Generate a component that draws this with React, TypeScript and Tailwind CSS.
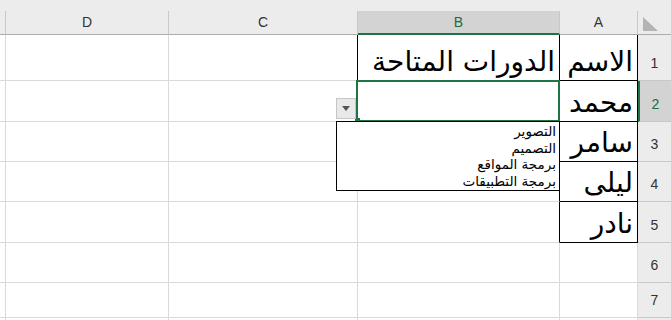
import React from 'react'

const COLS = ['E', 'D', 'C', 'B', 'A']
const ROW_H = [46, 41, 40, 40, 41, 40, 35, 30]
const NAMES: Record<number, string> = { 1: 'الاسم', 2: 'محمد', 3: 'سامر', 4: 'ليلى', 5: 'نادر' }
const COURSES = ['التصوير', 'التصميم', 'برمجة المواقع', 'برمجة التطبيقات']

const arabic = { fontFamily: '"DejaVu Sans", "Liberation Sans", sans-serif' }

function Cell({ col, row }: { col: string; row: number }) {
  // borders: default gray grid, black where the data table is
  let cls = 'border-r border-b border-[#dadada]'
  if (col === 'C' && row === 1) cls = 'border-r border-b border-r-black border-b-[#dadada]'
  if (col === 'B' && row === 1) cls = 'border-r border-b border-black'
  if (col === 'B' && row >= 2 && row <= 5) cls = 'border-r border-b border-r-black border-b-[#dadada]'
  if (col === 'A' && row <= 5) cls = 'border-r border-b border-black'

  let text = ''
  if (col === 'A') text = NAMES[row] ?? ''
  if (col === 'B' && row === 1) text = 'الدورات المتاحة'

  return (
    <div className={`relative flex items-end justify-end bg-white ${cls}`}>
      {text && (
        <span dir="rtl" className="pr-[4px] pb-[4px] text-[28px] leading-none text-black" style={arabic}>
          {text}
        </span>
      )}
      {col === 'B' && row === 2 && (
        <div className="pointer-events-none absolute -left-[2px] -top-[1px] right-[-1px] bottom-[-1px] border-2 border-[#217346]">
          <div className="absolute -bottom-[3px] -left-[3px] h-[5px] w-[5px] bg-[#217346]" />
        </div>
      )}
    </div>
  )
}

export default function App() {
  return (
    <div className="relative h-[320px] w-[671px] overflow-hidden bg-white select-none" style={{ fontFamily: '"Liberation Sans", Arial, sans-serif' }}>
      <div className="h-[11px] bg-[#ececec]" />
      <div className="grid grid-cols-[6px_163px_189px_202px_78px_33px]" style={{ gridTemplateRows: `24px ${ROW_H.map(h => h + 'px').join(' ')}` }}>
        {/* column headers */}
        {COLS.map(c => (
          <div
            key={c}
            className={`flex items-center justify-center border-r border-r-[#c8c8c8] text-[14px] ${
              c === 'B' ? 'bg-[#d3d3d3] border-b-2 border-b-[#217346] text-[#1e6b41]' : 'bg-[#ececec] border-b border-b-[#ababab] text-[#333]'
            }`}
          >
            {c === 'E' ? '' : c}
          </div>
        ))}
        <div className="relative bg-[#ececec] border-b border-b-[#ababab]">
          <svg className="absolute left-[5px] top-[6px]" width="15" height="14" viewBox="0 0 15 14">
            <polygon points="0,0 0,14 15,14" fill="#b4b4b4" />
          </svg>
        </div>

        {ROW_H.map((_, i) => {
          const row = i + 1
          return (
            <React.Fragment key={row}>
              {COLS.map(c => (
                <Cell key={c} col={c} row={row} />
              ))}
              <div
                className={`flex items-end justify-center pb-[6px] border-b border-b-[#c8c8c8] text-[14px] ${
                  row === 2 ? 'bg-[#d3d3d3] border-l-2 border-l-[#217346] text-[#1e6b41]' : 'bg-[#ececec] text-[#333]'
                }`}
              >
                {row < 8 ? row : ''}
              </div>
            </React.Fragment>
          )
        })}
      </div>

      {/* data validation arrow */}
      <div className="absolute left-[336px] top-[98px] flex h-[21px] w-[20px] items-center justify-center border border-[#c6c6c6] bg-[#e9e9e9]">
        <svg width="8" height="5" viewBox="0 0 8 5">
          <polygon points="0,0 8,0 4,5" fill="#555" />
        </svg>
      </div>

      {/* dropdown list */}
      <div dir="rtl" className="absolute left-[336px] top-[121px] h-[70px] w-[224px] border border-black bg-white pr-[3px] pt-[1px]" style={arabic}>
        {COURSES.map(c => (
          <div key={c} className="h-[16.5px] text-[13.5px] leading-[16px] text-black">
            {c}
          </div>
        ))}
      </div>
    </div>
  )
}
